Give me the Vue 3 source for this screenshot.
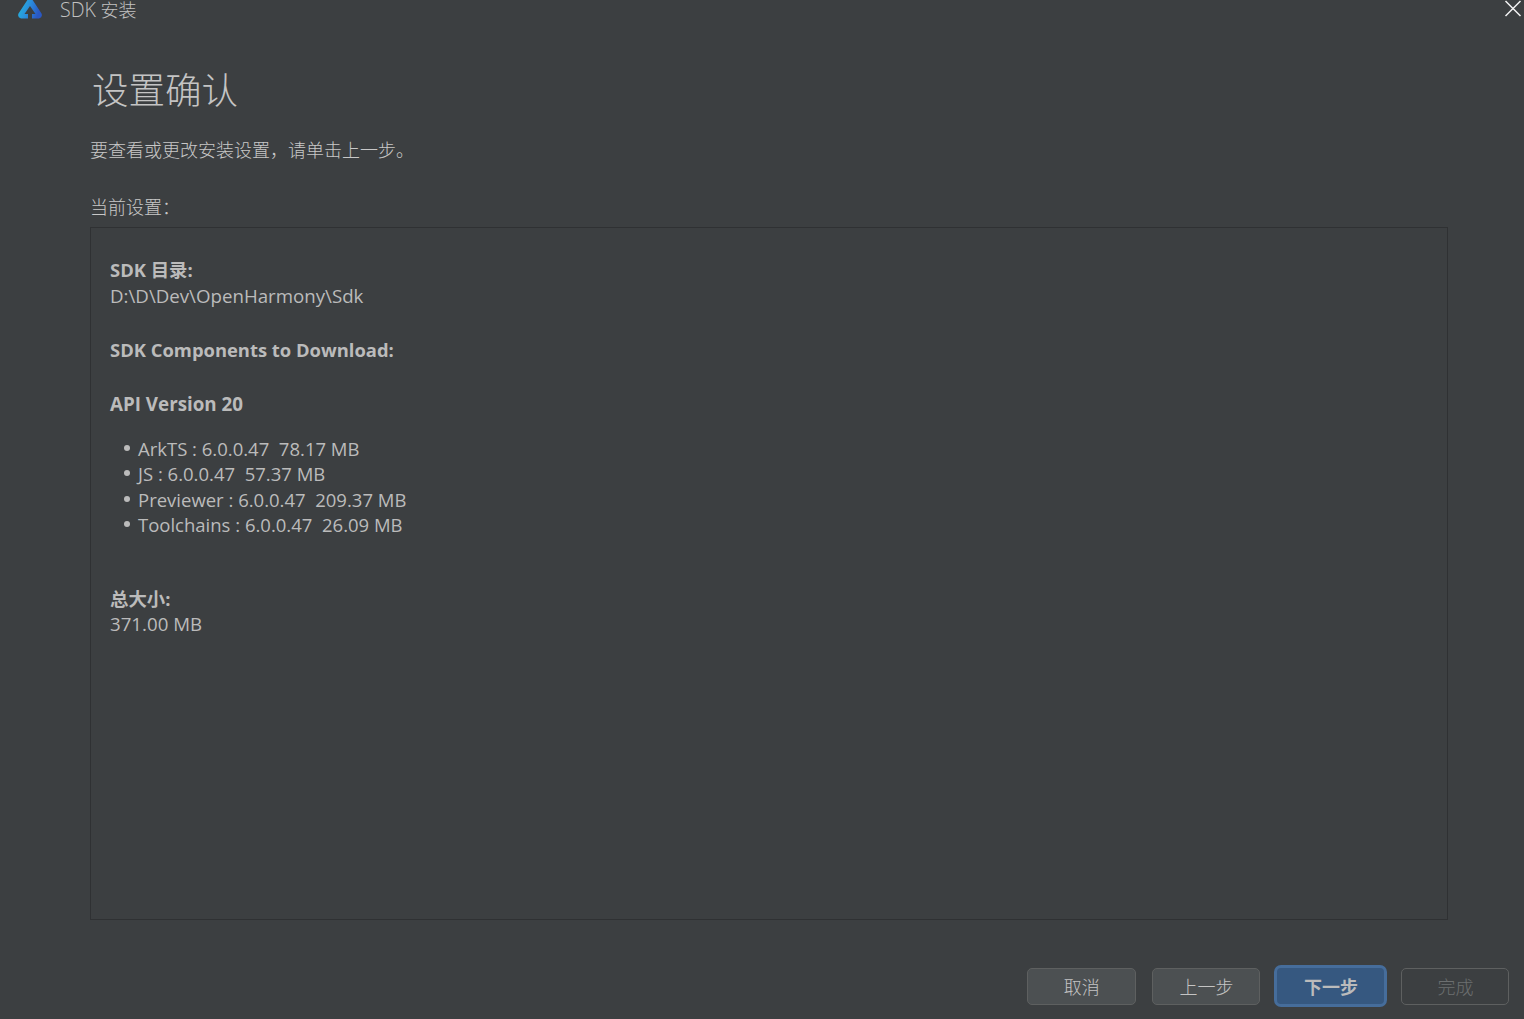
<script setup>
const items = [
  'ArkTS : 6.0.0.47  78.17 MB',
  'JS : 6.0.0.47  57.37 MB',
  'Previewer : 6.0.0.47  209.37 MB',
  'Toolchains : 6.0.0.47  26.09 MB',
]
</script>

<template>
  <div class="window">
    <header class="titlebar">
      <svg class="logo" width="26" height="20" viewBox="0 0 26 20">
        <defs>
          <linearGradient id="lg" x1="0" y1="0" x2="1" y2="0.35">
            <stop offset="0" stop-color="#22c0dc" />
            <stop offset="0.55" stop-color="#2a8fdc" />
            <stop offset="1" stop-color="#2a58c4" />
          </linearGradient>
        </defs>
        <path fill-rule="evenodd" d="M13 -4 L24.5 13.5 Q26 17 22 18.5 L15 18.5 L15 14 L18.5 14 L13 6 L7.5 14 L11 14 L11 18.5 L4 18.5 Q0 17 1.5 13.5 Z" fill="url(#lg)" />
      </svg>
      <span class="wintitle"><span class="latin">SDK</span> 安装</span>
      <svg class="close" width="18" height="18" viewBox="0 0 18 18">
        <path d="M1.5 1 L16.5 16 M16.5 1 L1.5 16" stroke="#f2f2f2" stroke-width="1.5" fill="none" />
      </svg>
    </header>

    <main class="content">
      <h1 class="heading">设置确认</h1>
      <p class="desc">要查看或更改安装设置，请单击上一步。</p>
      <p class="label">当前设置：</p>
      <section class="panel">
        <div class="b">SDK 目录:</div>
        <div class="path">D:\D\Dev\OpenHarmony\Sdk</div>
        <div class="b gap-first">SDK Components to Download:</div>
        <div class="b api">API Version 20</div>
        <ul class="list">
          <li v-for="item in items" :key="item">{{ item }}</li>
        </ul>
        <div class="b total">总大小:</div>
        <div class="size">371.00 MB</div>
      </section>
    </main>

    <footer class="actions">
      <button class="btn">取消</button>
      <button class="btn prev">上一步</button>
      <button class="btn primary">下一步</button>
      <button class="btn disabled">完成</button>
    </footer>
  </div>
</template>

<style>
html, body { margin: 0; background: #3c3f41; }
</style>

<style scoped>
.window {
  width: 1524px;
  height: 1019px;
  background: #3c3f41;
  color: #bbbbbb;
  font-family: "Open Sans", "Noto Sans CJK SC", sans-serif;
  font-size: 18px;
  display: flex;
  flex-direction: column;
  overflow: hidden;
  box-sizing: border-box;
}
.titlebar {
  height: 20px;
  flex: none;
  display: flex;
  align-items: flex-start;
  padding-left: 17px;
  position: relative;
}
.logo { flex: none; }
.wintitle { margin-left: 17px; font-size: 18px; line-height: 19px; font-weight: 300; color: #c2c2c2; }
.latin { font-size: 19.6px; }
.close { position: absolute; right: 2px; top: 0; }
.content {
  flex: none;
  padding: 0 76px 0 90px;
  display: flex;
  flex-direction: column;
}
.heading {
  margin: 47px 0 0 2px;
  font-size: 36.5px;
  line-height: 46px;
  font-weight: 300;
  color: #c4c4c4;
}
.desc { margin: 24px 0 0; line-height: 26px; font-weight: 300; color: #c8c8c8; }
.label { margin: 31px 0 0; line-height: 26px; font-weight: 300; color: #c8c8c8; }
.panel {
  margin-top: 7px;
  height: 693px;
  box-sizing: border-box;
  border: 1px solid #2f3133;
  padding: 29px 19px 0;
  line-height: 25.5px;
  font-weight: 400;
}
.path { font-size: 18.7px; }
.size { font-size: 18.7px; line-height: 25.5px; }
.b { font-weight: 700; font-size: 18.4px; }
.gap-first { margin-top: 28.5px; }
.api { font-size: 18.8px; margin-top: 30px; }
.list { margin: 18px 0 0; padding: 0 0 0 28px; list-style: none; font-size: 18.5px; }
.list li { white-space: pre; position: relative; }
.list li::before {
  content: "";
  position: absolute;
  left: -14px;
  top: 9px;
  width: 6px;
  height: 6px;
  border-radius: 50%;
  background: #bbbbbb;
}
.total { margin-top: 48px; }
.actions {
  flex: none;
  margin-top: 45px;
  height: 42px;
  padding-left: 1027px;
  display: flex;
  align-items: center;
}
.btn {
  width: 108.5px;
  height: 37px;
  margin-top: 1px;
  box-sizing: border-box;
  border: 1.5px solid #5e6060;
  border-radius: 5px;
  background: #4c5052;
  color: #c4c4c4;
  font: inherit;
  font-weight: 300;
  line-height: 32px;
  padding: 1px 0 0 1px;
}
.prev { margin-left: 16.5px; width: 108px; }
.primary {
  margin-left: 14px;
  margin-top: 0;
  width: 113px;
  height: 42px;
  background: #365880;
  border: 3px solid #466d9b;
  outline: none;
  border-radius: 7px;
  font-weight: 700;
  color: #bbbbbb;
}
.disabled {
  margin-left: 14px;
  width: 108px;
  background: transparent;
  color: #6c6f70;
}
</style>
